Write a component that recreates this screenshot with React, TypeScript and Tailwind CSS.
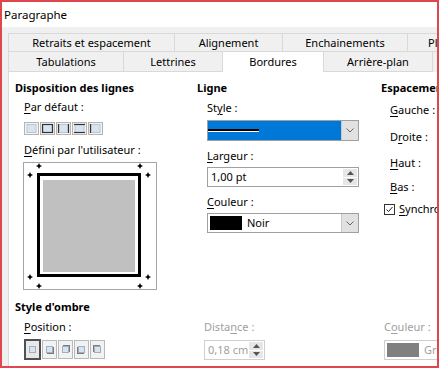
import React from 'react'

const U = ({ children }: { children: React.ReactNode }) => <span className="underline underline-offset-2">{children}</span>

function Star({ x, y }: { x: number; y: number }) {
  return (
    <path
      d={`M${x} ${y - 3}L${x + 1} ${y - 1}L${x + 3} ${y}L${x + 1} ${y + 1}L${x} ${y + 3}L${x - 1} ${y + 1}L${x - 3} ${y}L${x - 1} ${y - 1}Z`}
      fill="#000"
    />
  )
}

function Preview() {
  return (
    <div className="mt-[4px] ml-[8px] w-[134px] h-[128px] border border-[#a6a6a6] bg-white">
      <svg width="132" height="126" viewBox="1 1 132 126">
        <rect x="20" y="18" width="92" height="92" fill="#c0c0c0" />
        <rect x="15.5" y="12.5" width="101" height="101" fill="none" stroke="#000" strokeWidth="3" />
        <Star x={16} y={4} />
        <Star x={7} y={13} />
        <Star x={117} y={4} />
        <Star x={125} y={13} />
        <Star x={7} y={115} />
        <Star x={16} y={124} />
        <Star x={125} y={115} />
        <Star x={117} y={124} />
      </svg>
    </div>
  )
}

// preset icons: which sides of the inner square are drawn dark
function Preset({ l, r, t, b }: { l?: boolean; r?: boolean; t?: boolean; b?: boolean }) {
  return (
    <svg width="15" height="13" viewBox="0 0 15 13">
      <rect x="0.5" y="0.5" width="14" height="12" fill="#f3f3f3" stroke="#b4b4b4" />
      <rect x="3" y="2.5" width="9" height="8" fill="#d7e4ef" stroke="#bcc6cf" strokeWidth="1" />
      {l && <line x1="2.5" y1="2" x2="2.5" y2="11" stroke="#333" strokeWidth="1.2" />}
      {r && <line x1="12.5" y1="2" x2="12.5" y2="11" stroke="#333" strokeWidth="1.2" />}
      {t && <line x1="2" y1="2.5" x2="13" y2="2.5" stroke="#333" strokeWidth="1.2" />}
      {b && <line x1="2" y1="10.5" x2="13" y2="10.5" stroke="#333" strokeWidth="1.2" />}
    </svg>
  )
}

function Shadow({ dx, dy, selected }: { dx: number; dy: number; selected?: boolean }) {
  return (
    <div className={selected ? 'w-[17px] h-[21px] border-2 border-[#505050] bg-[#e8e8e8] flex items-center justify-center' : 'w-[15px] h-[19px] border border-[#b9b9b9] bg-[#f2f2f2] flex items-center justify-center'}>
      <svg width="11" height="11" viewBox="0 0 11 11">
        {!selected && <rect x={2 + dx} y={2 + dy} width="7" height="7" fill="#7a7a7a" />}
        <rect x="2.5" y="2.5" width="6" height="6" fill="#d7e4ef" stroke="#9fb0c0" />
      </svg>
    </div>
  )
}

function Spinner() {
  return (
    <div className="flex flex-col gap-[1px] w-[14px] h-[16px] mr-[1px]">
      <div className="flex-1 bg-[#e6e6e6] flex items-center justify-center">
        <svg width="7" height="4" viewBox="0 0 7 4"><path d="M0 4L3.5 0L7 4Z" fill="#555" /></svg>
      </div>
      <div className="flex-1 bg-[#e6e6e6] flex items-center justify-center">
        <svg width="7" height="4" viewBox="0 0 7 4"><path d="M0 0L3.5 4L7 0Z" fill="#555" /></svg>
      </div>
    </div>
  )
}

function Chevron() {
  return (
    <div className="w-[17px] h-full bg-[#e1e1e1] border-l border-[#c8c8c8] flex items-center justify-center">
      <svg width="8" height="5" viewBox="0 0 8 5"><path d="M0.5 0.5L4 4L7.5 0.5" fill="none" stroke="#666" strokeWidth="1" /></svg>
    </div>
  )
}

export default function App() {
  return (
    <div className="w-[440px] h-[369px] bg-white font-['Noto_Sans',sans-serif] text-[11px] text-black leading-[16px]">
      <div className="w-[439px] h-[368px] border-2 border-[#e0474c] overflow-hidden flex flex-col">
        {/* Title */}
        <div className="h-[25px] shrink-0 bg-white pl-[2px] pt-[5px] text-[11.5px]">Paragraphe</div>

        <div className="flex-1 bg-[#f0f0f0] pl-[6px] pt-[6px] flex flex-col">
          {/* Tabs */}
          <div className="flex h-[19px] w-[520px]">
            <div className="w-[166px] border border-r-0 border-[#d9d9d9] flex items-center justify-center">Retraits et espacement</div>
            <div className="w-[108px] border border-r-0 border-[#d9d9d9] flex items-center justify-center">Alignement</div>
            <div className="w-[125px] border border-r-0 border-[#d9d9d9] flex items-center justify-center">Enchainements</div>
            <div className="w-[120px] border border-[#d9d9d9] flex items-center pl-[20px]">Plan</div>
          </div>
          <div className="flex h-[20px] w-[520px]">
            <div className="w-[115px] border border-t-0 border-r-0 border-[#d9d9d9] flex items-center justify-center">Tabulations</div>
            <div className="w-[99px] border border-t-0 border-r-0 border-[#d9d9d9] flex items-center justify-center">Lettrines</div>
            <div className="w-[101px] border-l border-[#d9d9d9] bg-white flex items-center justify-center">Bordures</div>
            <div className="w-[110px] border border-t-0 border-[#d9d9d9] flex items-center justify-center">Arrière-plan</div>
          </div>

          {/* Panel */}
          <div className="flex-1 bg-white border-l border-[#d9d9d9] pl-[6px] flex flex-col">
            <div className="flex">
              {/* Disposition */}
              <div className="w-[182px] shrink-0 flex flex-col">
                <div className="mt-[8px] font-bold">Disposition des lignes</div>
                <div className="mt-[3px] pl-[9px]"><U>P</U>ar défaut :</div>
                <div className="mt-[7px] pl-[9px] flex gap-[1px]">
                  <Preset />
                  <Preset l r t b />
                  <Preset l r />
                  <Preset t b />
                  <Preset l />
                </div>
                <div className="mt-[7px] pl-[9px]"><U>D</U>éfini par l'utilisateur :</div>
                <Preview />
              </div>

              {/* Ligne */}
              <div className="w-[184px] shrink-0 flex flex-col">
                <div className="mt-[8px] font-bold">Ligne</div>
                <div className="mt-[4px] pl-[10px]">St<U>y</U>le :</div>
                <div className="mt-[4px] ml-[10px] w-[152px] h-[21px] border border-[#a0a0a0] flex">
                  <div className="flex-1 bg-[#0078d7] flex flex-col justify-center">
                    <div className="w-[51px] h-[2px] bg-black" />
                    <div className="w-[51px] h-[1px] bg-white" />
                  </div>
                  <Chevron />
                </div>
                <div className="mt-[7px] pl-[10px]"><U>L</U>argeur :</div>
                <div className="mt-[3px] ml-[10px] w-[152px] h-[20px] border border-[#a0a0a0] flex items-center">
                  <div className="flex-1 pl-[3px]">1,00 pt</div>
                  <Spinner />
                </div>
                <div className="mt-[7px] pl-[10px]"><U>C</U>ouleur :</div>
                <div className="mt-[3px] ml-[10px] w-[152px] h-[20px] border border-[#a0a0a0] flex items-center">
                  <div className="ml-[2px] w-[32px] h-[14px] bg-black" />
                  <div className="flex-1 pl-[5px]">Noir</div>
                  <Chevron />
                </div>
              </div>

              {/* Espacement */}
              <div className="flex-1 flex flex-col whitespace-nowrap">
                <div className="mt-[8px] font-bold">Espacement avec le contenu</div>
                <div className="mt-[6px] pl-[9px]"><U>G</U>auche :</div>
                <div className="mt-[11px] pl-[9px]">D<U>r</U>oite :</div>
                <div className="mt-[10px] pl-[9px]"><U>H</U>aut :</div>
                <div className="mt-[8px] pl-[9px]"><U>B</U>as :</div>
                <div className="mt-[6px] pl-[3px] flex items-center gap-[4px]">
                  <div className="w-[11px] h-[11px] border border-[#333] flex items-center justify-center">
                    <svg width="9" height="9" viewBox="0 0 9 9"><path d="M1.5 4.5L3.5 6.5L7.5 2" fill="none" stroke="#222" strokeWidth="1" /></svg>
                  </div>
                  <span><U>S</U>ynchroniser</span>
                </div>
              </div>
            </div>

            {/* Ombre */}
            <div className="mt-[9px] font-bold">Style d'ombre</div>
            <div className="flex mt-[4px]">
              <div className="w-[189px] shrink-0 pl-[9px] flex flex-col">
                <div><U>P</U>osition :</div>
                <div className="mt-[4px] flex items-center gap-[1px]">
                  <Shadow dx={0} dy={0} selected />
                  <Shadow dx={1} dy={1} />
                  <Shadow dx={1} dy={-1} />
                  <Shadow dx={-1} dy={1} />
                  <Shadow dx={-1} dy={-1} />
                </div>
              </div>
              <div className="w-[180px] shrink-0 flex flex-col text-[#a0a0a0]">
                <div>Dista<U>n</U>ce :</div>
                <div className="mt-[5px] w-[61px] h-[20px] border border-[#cfcfcf] flex items-center">
                  <div className="flex-1 pl-[3px]">0,18 cm</div>
                  <Spinner />
                </div>
              </div>
              <div className="flex-1 flex flex-col text-[#a0a0a0] whitespace-nowrap">
                <div>C<U>o</U>uleur :</div>
                <div className="mt-[5px] w-[120px] h-[20px] border border-[#cfcfcf] flex items-center">
                  <div className="ml-[2px] w-[32px] h-[14px] bg-[#808080]" />
                  <div className="pl-[5px]">Gris</div>
                </div>
              </div>
            </div>
          </div>
        </div>
      </div>
    </div>
  )
}
